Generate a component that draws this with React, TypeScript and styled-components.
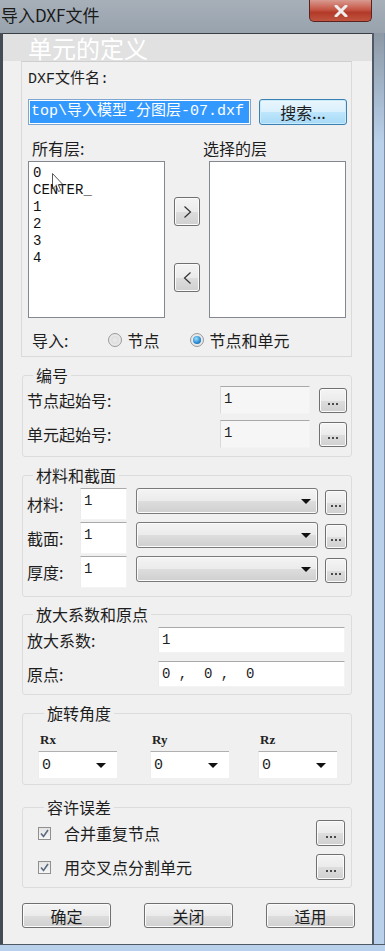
import React from 'react';
import styled, { createGlobalStyle } from 'styled-components';

const cjk = `"Noto Sans CJK SC", "Noto Sans", sans-serif`;
const mono = `"Liberation Mono", "Noto Sans CJK SC", monospace`;

const GlobalStyle = createGlobalStyle`
  html, body {
    margin: 0;
    padding: 0;
    background: #8b96a2;
  }
`;

const Window = styled.div`
  width: 385px;
  height: 951px;
  display: flex;
  flex-direction: column;
  overflow: hidden;
  background: #8b96a2;
  font-family: ${cjk};
  color: #1e1e1e;
`;

const TitleBar = styled.div`
  height: 33px;
  flex: none;
  display: flex;
  justify-content: space-between;
  align-items: flex-start;
  background: linear-gradient(180deg, #a7b0b9 0%, #98a2ad 100%);
`;

const Title = styled.div`
  font-size: 17px;
  line-height: 30px;
  padding-left: 1px;
  color: #1a1a1a;
`;

const CloseButton = styled.div`
  width: 61px;
  height: 21px;
  margin-right: 13px;
  border: 1px solid #5a2320;
  border-top: none;
  border-radius: 0 0 5px 5px;
  background: linear-gradient(180deg, #d99a90 0%, #c65747 45%, #b23a28 60%, #c0553f 100%);
  display: flex;
  align-items: center;
  justify-content: center;
`;

const Body = styled.div`
  flex: 1;
  min-height: 0;
  display: flex;
`;

const LeftFrame = styled.div`
  width: 3px;
  flex: none;
  background: #454b52;
`;

const RightFrame = styled.div`
  width: 10px;
  flex: none;
  border-left: 2px solid #4f5a66;
  border-right: 1px solid #7d8fa2;
  background: linear-gradient(180deg, #8e99a5 0px, #a5b8cc 60px, #b9d1ea 110px);
`;

const BottomFrame = styled.div`
  height: 6px;
  flex: none;
  border-top: 1px solid #4f5a66;
  background: #b9d1ea;
`;

const Client = styled.div`
  flex: 1;
  display: flex;
  flex-direction: column;
  background: #f0f0f0;
  border-top: 1px solid #3a3f45;
`;

const Heading = styled.div`
  height: 27px;
  padding-left: 25px;
  font-size: 24px;
  line-height: 27px;
  color: #ffffff;
  background: #e1e1e1;
`;

const FileGroup = styled.div`
  height: 296px;
  box-sizing: border-box;
  margin: 0 20px 0 18px;
  padding: 8px 0 0 6px;
  border: 1px solid #dadada;
  border-top-color: #cfcfcf;
`;

const Label = styled.div<{ $indent?: number }>`
  font-size: 16px;
  line-height: 20px;
  padding-left: ${p => p.$indent ?? 0}px;
  white-space: nowrap;
`;

const MonoLabel = styled(Label)`
  font-family: ${mono};
  font-size: 15px;
`;

const FileRow = styled.div`
  display: flex;
  gap: 8px;
  margin-top: 9px;
`;

const FileInput = styled.div`
  width: 223px;
  height: 26px;
  box-sizing: border-box;
  border: 1px solid #7ea6cf;
  padding: 1px;
  background: #ffffff;
  overflow: hidden;
`;

const Selection = styled.div`
  height: 100%;
  background: #3399ff;
  color: #ffffff;
  font-family: ${mono};
  font-size: 15px;
  line-height: 22px;
  white-space: nowrap;
  overflow: hidden;
  padding-left: 1px;
`;

const PushButton = styled.div<{ $w: number; $h?: number; $focus?: boolean }>`
  width: ${p => p.$w}px;
  height: ${p => p.$h ?? 25}px;
  box-sizing: border-box;
  flex: none;
  border: 1px solid ${p => (p.$focus ? '#3c7fb1' : '#707070')};
  border-radius: 3px;
  background: ${p =>
    p.$focus
      ? 'linear-gradient(180deg, #eaf6fd 0%, #d9f0fc 50%, #bee6fd 51%, #a7d9f5 100%)'
      : 'linear-gradient(180deg, #f4f4f4 0%, #ebebeb 50%, #dddddd 51%, #d0d0d0 100%)'};
  box-shadow: inset 0 0 0 1px ${p => (p.$focus ? '#c9ecfd' : '#fbfbfb')};
  display: flex;
  align-items: center;
  justify-content: center;
  font-size: 16px;
  line-height: 20px;
  color: #1e1e1e;
`;

const Dots = styled.span`
  display: flex;
  gap: 2px;
  margin-top: 7px;
`;

const Dot = styled.span`
  width: 2px;
  height: 2px;
  background: #4a4a4a;
`;

const ListHeaders = styled.div`
  display: grid;
  grid-template-columns: 175px 1fr;
  margin-top: 13px;
`;

const ListArea = styled.div`
  display: grid;
  grid-template-columns: 137px 44px 137px;
  margin-top: 3px;
`;

const ListBox = styled.div`
  position: relative;
  height: 157px;
  box-sizing: border-box;
  border: 1px solid #828790;
  background: #ffffff;
  padding: 3px 4px;
`;

const ListItem = styled.div`
  font-family: ${mono};
  font-size: 14px;
  line-height: 17px;
  color: #111;
`;

const Cursor = styled.svg`
  position: absolute;
  left: 23px;
  top: 11px;
  opacity: 0.75;
`;

const MoveColumn = styled.div`
  display: flex;
  flex-direction: column;
  align-items: center;
  padding-top: 36px;
  gap: 37px;
`;

const RadioRow = styled.div`
  display: flex;
  align-items: center;
  margin-top: 12px;
  padding-left: 4px;
`;

const RadioOption = styled.div<{ $at: number }>`
  display: flex;
  align-items: center;
  gap: 5px;
  margin-left: ${p => p.$at}px;
  font-size: 16px;
  line-height: 20px;
`;

const RadioMark = styled.span<{ $checked?: boolean }>`
  width: 14px;
  height: 14px;
  box-sizing: border-box;
  border-radius: 50%;
  border: 1px solid #9a9a9a;
  background: radial-gradient(circle at 50% 50%, #f6f6f6 0%, #dedede 100%);
  display: flex;
  align-items: center;
  justify-content: center;

  &::after {
    content: '';
    width: 8px;
    height: 8px;
    border-radius: 50%;
    background: ${p =>
      p.$checked
        ? 'radial-gradient(circle at 40% 35%, #9fe0fb 0%, #2d8fd6 55%, #0d4f8f 100%)'
        : 'radial-gradient(circle at 50% 50%, #ececec 0%, #d6d6d6 100%)'};
  }
`;

const GroupBox = styled.fieldset<{ $top: number; $pad: string }>`
  margin: ${p => p.$top}px 20px 0 19px;
  padding: ${p => p.$pad};
  border: 1px solid #dcdcdc;
  border-radius: 3px;
  min-width: 0;
`;

const GroupTitle = styled.legend`
  font-size: 16px;
  line-height: 20px;
  padding: 0 3px;
  margin-left: 6px;
  color: #1e1e1e;
`;

const Rows = styled.div<{ $gap: number }>`
  display: flex;
  flex-direction: column;
  gap: ${p => p.$gap}px;
`;

const FieldRow = styled.div<{ $h: number }>`
  display: flex;
  align-items: center;
  height: ${p => p.$h}px;
`;

const RowLabel = styled.div<{ $w: number }>`
  width: ${p => p.$w}px;
  flex: none;
  font-size: 16px;
  line-height: 20px;
  white-space: nowrap;
`;

const ValueBox = styled.div<{ $w: number; $h: number; $muted?: boolean }>`
  width: ${p => p.$w}px;
  height: ${p => p.$h}px;
  box-sizing: border-box;
  flex: none;
  background: ${p => (p.$muted ? '#f6f6f6' : '#ffffff')};
  border-top: 1px solid #a9a9a9;
  border-left: 1px solid ${p => (p.$muted ? '#d9d9d9' : '#ececec')};
  border-right: 1px solid #f3f3f3;
  border-bottom: 1px solid #f3f3f3;
  padding: 3px 0 0 3px;
  font-family: ${mono};
  font-size: 14px;
  line-height: 18px;
  white-space: pre;
  color: #1e1e1e;
`;

const Gap = styled.span<{ $w: number }>`
  width: ${p => p.$w}px;
  flex: none;
`;

const DropButton = styled.div<{ $w: number }>`
  width: ${p => p.$w}px;
  height: 26px;
  box-sizing: border-box;
  flex: none;
  border: 1px solid #7a7a7a;
  border-radius: 3px;
  background: linear-gradient(180deg, #f4f4f4 0%, #ebebeb 50%, #dddddd 51%, #cfcfcf 100%);
  box-shadow: inset 0 0 0 1px #fbfbfb;
  display: flex;
  align-items: center;
  justify-content: flex-end;
  padding-right: 6px;
`;

const Caret = styled.span`
  width: 0;
  height: 0;
  border-left: 5px solid transparent;
  border-right: 5px solid transparent;
  border-top: 5px solid #111;
`;

const MaterialRow = styled.div`
  display: flex;
  align-items: flex-start;
  height: 32px;
`;

const MaterialLabel = styled(RowLabel)`
  align-self: center;
`;

const LowSlot = styled.div`
  margin-top: 2px;
`;

const AxisGrid = styled.div`
  display: grid;
  grid-template-columns: 112px 108px 1fr;
`;

const AxisCell = styled.div`
  display: flex;
  flex-direction: column;
  gap: 3px;
`;

const AxisLabel = styled.div`
  font-family: "Liberation Serif", serif;
  font-weight: bold;
  font-size: 13px;
  line-height: 16px;
  padding-left: 2px;
  color: #222;
`;

const AxisSelect = styled.div`
  width: 79px;
  height: 27px;
  box-sizing: border-box;
  background: #ffffff;
  border-top: 1px solid #b0b0b0;
  border-left: 1px solid #ececec;
  display: flex;
  align-items: center;
  justify-content: space-between;
  padding: 0 11px 0 3px;
  font-family: ${mono};
  font-size: 15px;
`;

const CheckRow = styled.div`
  display: flex;
  align-items: center;
  height: 26px;
`;

const CheckMark = styled.span`
  width: 13px;
  height: 13px;
  box-sizing: border-box;
  flex: none;
  border: 1px solid #8f8f8f;
  background: linear-gradient(180deg, #e4e4e4 0%, #f7f7f7 100%);
  display: flex;
  align-items: center;
  justify-content: center;
`;

const CheckText = styled.div`
  flex: 1;
  margin-left: 13px;
  font-size: 16px;
  line-height: 20px;
`;

const ActionRow = styled.div`
  display: flex;
  justify-content: space-between;
  margin-top: 15px;
  padding: 0 17px 0 19px;
`;

const Ellipsis = ({ w = 28, h = 25 }: { w?: number; h?: number }) => (
  <PushButton $w={w} $h={h}>
    <Dots>
      <Dot />
      <Dot />
      <Dot />
    </Dots>
  </PushButton>
);

const Chevron = ({ dir }: { dir: 'left' | 'right' }) => (
  <svg width="9" height="14" viewBox="0 0 9 14">
    <polyline
      points={dir === 'right' ? '1.5,1.5 7.5,7 1.5,12.5' : '7.5,1.5 1.5,7 7.5,12.5'}
      fill="none"
      stroke="#333"
      strokeWidth="1.2"
    />
  </svg>
);

const layers = ['0', 'CENTER_', '1', '2', '3', '4'];
const materials = ['材料:', '截面:', '厚度:'];

export default function App() {
  return (
    <>
      <GlobalStyle />
      <Window>
        <TitleBar>
          <Title>导入DXF文件</Title>
          <CloseButton>
            <svg width="14" height="12" viewBox="0 0 14 12">
              <path d="M2 1 L12 11 M12 1 L2 11" stroke="#eeeeee" strokeWidth="3" strokeLinecap="round" />
            </svg>
          </CloseButton>
        </TitleBar>
        <Body>
          <LeftFrame />
          <Client>
            <Heading>单元的定义</Heading>
            <FileGroup>
              <MonoLabel>DXF文件名:</MonoLabel>
              <FileRow>
                <FileInput>
                  <Selection>top\导入模型-分图层-07.dxf</Selection>
                </FileInput>
                <PushButton $w={88} $h={26} $focus>搜索...</PushButton>
              </FileRow>
              <ListHeaders>
                <Label $indent={4}>所有层:</Label>
                <Label>选择的层</Label>
              </ListHeaders>
              <ListArea>
                <ListBox>
                  {layers.map(l => (
                    <ListItem key={l}>{l}</ListItem>
                  ))}
                  <Cursor width="12" height="20" viewBox="0 0 12 20">
                    <path d="M0.5 0.5 L0.5 16 L4 12.5 L6.5 18.5 L8.8 17.5 L6.3 11.7 L11 11.7 Z" fill="#ffffff" stroke="#222" strokeWidth="1" />
                  </Cursor>
                </ListBox>
                <MoveColumn>
                  <PushButton $w={26} $h={29}><Chevron dir="right" /></PushButton>
                  <PushButton $w={26} $h={29}><Chevron dir="left" /></PushButton>
                </MoveColumn>
                <ListBox />
              </ListArea>
              <RadioRow>
                <Label>导入:</Label>
                <RadioOption $at={40}>
                  <RadioMark />
                  节点
                </RadioOption>
                <RadioOption $at={31}>
                  <RadioMark $checked />
                  节点和单元
                </RadioOption>
              </RadioRow>
            </FileGroup>

            <GroupBox $top={8} $pad="1px 4px 8px 4px">
              <GroupTitle>编号</GroupTitle>
              <Rows $gap={6}>
                <FieldRow $h={28}>
                  <RowLabel $w={193}>节点起始号:</RowLabel>
                  <ValueBox $w={90} $h={28} $muted>1</ValueBox>
                  <Gap $w={9} />
                  <Ellipsis />
                </FieldRow>
                <FieldRow $h={28}>
                  <RowLabel $w={193}>单元起始号:</RowLabel>
                  <ValueBox $w={90} $h={28} $muted>1</ValueBox>
                  <Gap $w={9} />
                  <Ellipsis />
                </FieldRow>
              </Rows>
            </GroupBox>

            <GroupBox $top={8} $pad="3px 4px 8px 4px">
              <GroupTitle>材料和截面</GroupTitle>
              <Rows $gap={2}>
                {materials.map(m => (
                  <MaterialRow key={m}>
                    <MaterialLabel $w={53}>{m}</MaterialLabel>
                    <ValueBox $w={47} $h={32}>1</ValueBox>
                    <Gap $w={9} />
                    <DropButton $w={182}><Caret /></DropButton>
                    <Gap $w={7} />
                    <LowSlot><Ellipsis w={22} /></LowSlot>
                  </MaterialRow>
                ))}
              </Rows>
            </GroupBox>

            <GroupBox $top={7} $pad="3px 4px 7px 4px">
              <GroupTitle>放大系数和原点</GroupTitle>
              <Rows $gap={8}>
                <FieldRow $h={26}>
                  <RowLabel $w={131}>放大系数:</RowLabel>
                  <ValueBox $w={187} $h={26}>1</ValueBox>
                </FieldRow>
                <FieldRow $h={26}>
                  <RowLabel $w={131}>原点:</RowLabel>
                  <ValueBox $w={187} $h={26}>{'0 ,  0 ,  0'}</ValueBox>
                </FieldRow>
              </Rows>
            </GroupBox>

            <GroupBox $top={8} $pad="9px 4px 6px 15px">
              <GroupTitle>旋转角度</GroupTitle>
              <AxisGrid>
                {['Rx', 'Ry', 'Rz'].map(a => (
                  <AxisCell key={a}>
                    <AxisLabel>{a}</AxisLabel>
                    <AxisSelect>
                      0
                      <Caret />
                    </AxisSelect>
                  </AxisCell>
                ))}
              </AxisGrid>
            </GroupBox>

            <GroupBox $top={12} $pad="3px 6px 7px 15px">
              <GroupTitle>容许误差</GroupTitle>
              <Rows $gap={8}>
                {['合并重复节点', '用交叉点分割单元'].map(t => (
                  <CheckRow key={t}>
                    <CheckMark>
                      <svg width="9" height="9" viewBox="0 0 9 9">
                        <path d="M1 4.5 L3.5 7.5 L8 1" fill="none" stroke="#5a6a80" strokeWidth="1.6" />
                      </svg>
                    </CheckMark>
                    <CheckText>{t}</CheckText>
                    <Ellipsis w={29} h={26} />
                  </CheckRow>
                ))}
              </Rows>
            </GroupBox>

            <ActionRow>
              <PushButton $w={89}>确定</PushButton>
              <PushButton $w={89}>关闭</PushButton>
              <PushButton $w={89}>适用</PushButton>
            </ActionRow>
          </Client>
          <RightFrame />
        </Body>
        <BottomFrame />
      </Window>
    </>
  );
}
